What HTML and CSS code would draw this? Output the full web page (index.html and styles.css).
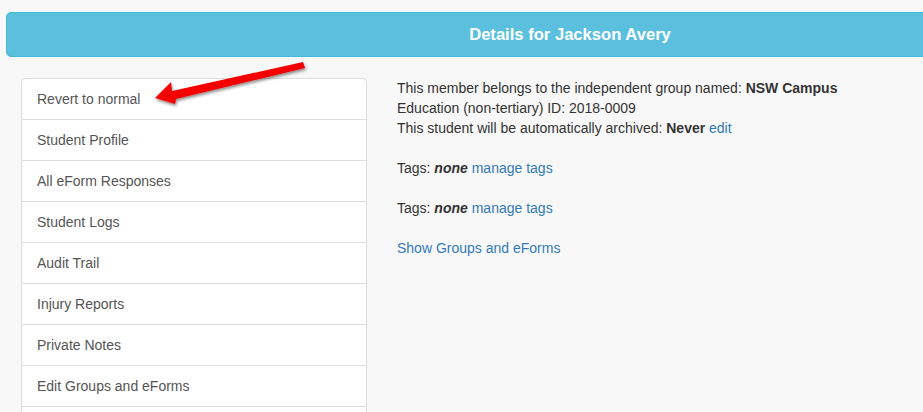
FILE: index.html
```html
<!DOCTYPE html>
<html>
<head>
<meta charset="utf-8">
<link rel="stylesheet" href="styles.css">
</head>
<body>
<div class="page">
  <div class="header"><h1 class="title">Details for Jackson Avery</h1></div>
  <div class="main">
    <ul class="menu">
      <li class="menu-item">Revert to normal</li>
      <li class="menu-item">Student Profile</li>
      <li class="menu-item">All eForm Responses</li>
      <li class="menu-item">Student Logs</li>
      <li class="menu-item">Audit Trail</li>
      <li class="menu-item">Injury Reports</li>
      <li class="menu-item">Private Notes</li>
      <li class="menu-item">Edit Groups and eForms</li>
      <li class="menu-item"></li>
    </ul>
    <div class="details">
      <p class="para">This member belongs to the independent group named: <b>NSW Campus</b><br>Education (non-tertiary) ID: 2018-0009<br>This student will be automatically archived: <b>Never</b> <a class="link">edit</a></p>
      <p class="para">Tags: <b><i>none</i></b> <a class="link">manage tags</a></p>
      <p class="para">Tags: <b><i>none</i></b> <a class="link">manage tags</a></p>
      <p class="para"><a class="link">Show Groups and eForms</a></p>
    </div>
  </div>
  <svg class="arrow" width="923" height="412" viewBox="0 0 923 412">
    <defs>
      <filter id="sh" x="-20%" y="-50%" width="140%" height="200%">
        <feDropShadow dx="1" dy="2" stdDeviation="1.5" flood-color="#000" flood-opacity="0.45"/>
      </filter>
    </defs>
    <polygon points="155,98 171,82 172,91 303,62 305,68 176,99 175,104" fill="#f50000" filter="url(#sh)"/>
  </svg>
</div>
</body>
</html>
```
FILE: styles.css
```css
html, body {
  margin: 0;
  padding: 0;
  background: #f8f8f8;
  overflow: hidden;
}
.page {
  position: relative;
  width: 923px;
  height: 412px;
  overflow: hidden;
  font-family: "Liberation Sans", Arial, sans-serif;
  font-size: 14px;
  line-height: 20px;
  color: #333;
}
.header {
  margin: 12px 0 0 6px;
  width: 1128px;
  height: 45px;
  background: #5bc0de;
  border: 1px solid #46b8da;
  box-sizing: border-box;
  border-radius: 5px;
  display: flex;
  align-items: center;
  justify-content: center;
}
.title {
  margin: 0;
  font-size: 16.6px;
  font-weight: bold;
  color: #fff;
  line-height: 20px;
}
.main {
  display: flex;
  gap: 30px;
  padding: 21px 0 0 21px;
}
.menu {
  list-style: none;
  margin: 0;
  padding: 0;
  width: 346px;
  flex: none;
}
.menu-item {
  background: #fff;
  border: 1px solid #ddd;
  margin-bottom: -1px;
  padding: 10px 15px;
  color: #555;
  height: 20px;
}
.menu-item:first-child {
  border-top-left-radius: 4px;
  border-top-right-radius: 4px;
}
.details {
  flex: 1;
}
.para {
  margin: 0 0 20px;
}
.link {
  color: #337ab7;
  text-decoration: none;
}
.arrow {
  position: absolute;
  left: 0;
  top: 0;
  pointer-events: none;
}
```
